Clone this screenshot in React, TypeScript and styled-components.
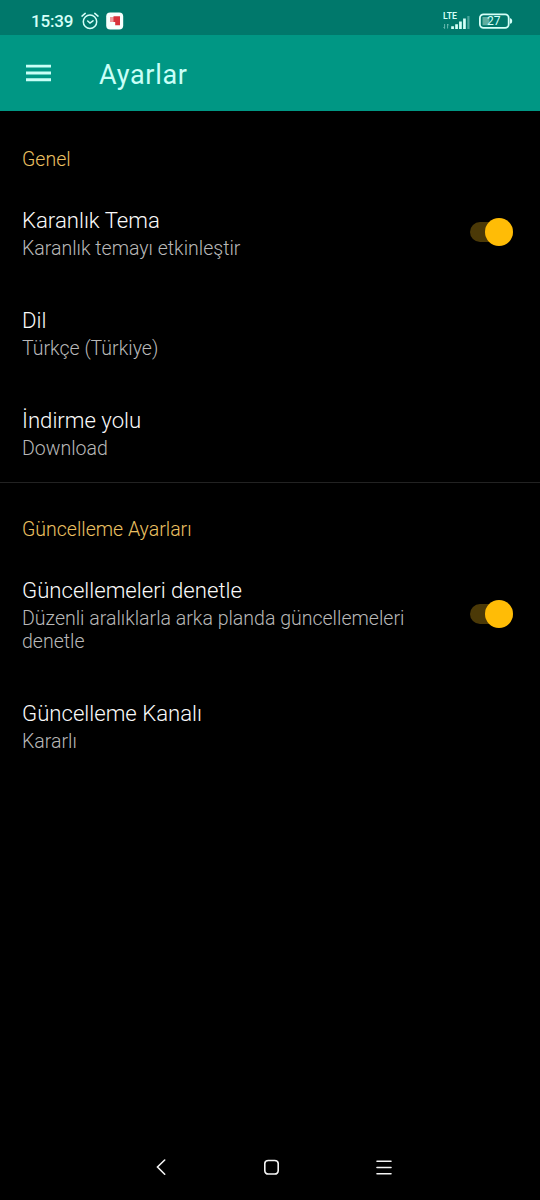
import React from 'react';
import styled, { createGlobalStyle } from 'styled-components';

const GlobalStyle = createGlobalStyle`
  * { box-sizing: border-box; }
  body { margin: 0; background: #000; font-family: Roboto, sans-serif; }
`;

const Screen = styled.div`
  width: 540px;
  height: 1200px;
  display: flex;
  flex-direction: column;
  background: #000;
  color: #fafafa;
  overflow: hidden;
`;

const StatusBar = styled.div`
  height: 35px;
  flex: none;
  display: flex;
  justify-content: space-between;
  padding: 7px 26px 0 31px;
  background: #00786b;
  color: #d5fff8;
`;

const StatusGroup = styled.div<{ $gap: number }>`
  display: flex;
  align-items: center;
  height: 28px;
  gap: ${(p) => p.$gap}px;
`;

const Clock = styled.span`
  width: 43px;
  font-size: 17px;
  font-weight: 500;
  line-height: 28px;
  letter-spacing: -0.2px;
  white-space: nowrap;
`;

const AppBar = styled.header`
  height: 76px;
  flex: none;
  display: flex;
  align-items: center;
  padding: 0 26px;
  gap: 48px;
  background: #009784;
  color: #c9fff7;
`;

const AppTitle = styled.h1`
  margin: 3px 0 0;
  font-size: 27px;
  font-weight: 400;
  line-height: 32px;
  letter-spacing: 0.7px;
`;

const Icon = styled.svg`
  display: block;
  flex: none;
`;

const Section = styled.section<{ $top: number }>`
  padding-top: ${(p) => p.$top}px;

  & + & { border-top: 1px solid #222; }
`;

const SectionTitle = styled.h2`
  margin: 0 0 13px;
  padding: 0 22px;
  font-size: 19.5px;
  font-weight: 350;
  line-height: 24px;
  color: #ecc062;
`;

const Row = styled.div`
  display: flex;
  align-items: center;
  justify-content: space-between;
  padding: 23px 27px 25px 22px;

  &:last-child { padding-bottom: 22px; }
`;

const RowText = styled.div`
  width: 400px;
`;

const RowTitle = styled.div`
  font-size: 22.15px;
  line-height: 24px;
  font-weight: 350;
  margin-bottom: 5px;
`;

const RowSummary = styled.div`
  font-size: 19.55px;
  line-height: 23px;
  font-weight: 300;
  color: #b8b8b8;
`;

const Track = styled.div`
  width: 43px;
  height: 20px;
  display: flex;
  align-items: center;
  justify-content: flex-end;
  margin-bottom: 4px;
  border-radius: 10px;
  background: #4b3907;
`;

const Thumb = styled.div`
  width: 28px;
  height: 28px;
  flex: none;
  border-radius: 50%;
  background: #ffbc06;
`;

const NavBar = styled.nav`
  margin-top: auto;
  height: 66px;
  display: flex;
  justify-content: space-between;
  align-items: center;
  padding: 0 147px 0 152px;
`;

const Switch = () => (
  <Track role="switch" aria-checked="true">
    <Thumb />
  </Track>
);

interface PreferenceProps {
  title: string;
  summary: string;
  toggle?: boolean;
}

const Preference = ({ title, summary, toggle }: PreferenceProps) => (
  <Row>
    <RowText>
      <RowTitle>{title}</RowTitle>
      <RowSummary>{summary}</RowSummary>
    </RowText>
    {toggle && <Switch />}
  </Row>
);

const AlarmIcon = () => (
  <Icon width="18" height="18" viewBox="0 0 18 18" fill="none" stroke="currentColor" strokeWidth="1.5" strokeLinecap="round">
    <circle cx="9" cy="9.7" r="6.7" />
    <path d="M1 4.1 4.2 1.4M17 4.1 13.8 1.4M6.7 9l2.3 2 3-2.2" />
  </Icon>
);

const AppBadge = () => (
  <Icon width="18" height="18" viewBox="0 0 18 18">
    <rect x="0.2" y="0.5" width="17" height="17" rx="4" fill="#f7fffd" />
    <path d="M4 5h5v5H4z" fill="#ef9a9c" />
    <path d="M7.5 4.2H14v9H9.2V10H7.5z" fill="#d8333b" />
  </Icon>
);

const SignalIcon = () => (
  <Icon width="29" height="20" viewBox="0 0 29 20" fill="currentColor">
    <text x="0" y="7.5" fontSize="8.5" fontWeight="600" textLength="14" lengthAdjust="spacingAndGlyphs">LTE</text>
    <path d="M8.2 15.2h2.7V18H8.2zM12.2 13.3h2.7V18h-2.7zM16.1 10.6h2.7V18h-2.7zM20.1 7.6h2.7V18h-2.7z" />
    <path d="M24.3 5h2.2v13h-2.2z" opacity="0.35" />
    <path d="M1.6 13v4.5M4.6 13v4.5M.6 16.2l1 1.3M4.6 13l1 1.3" stroke="currentColor" strokeWidth="0.8" opacity="0.6" />
  </Icon>
);

const BatteryIcon = () => (
  <Icon width="36" height="16" viewBox="0 0 36 16">
    <rect x="1.9" y="1.3" width="28.8" height="13.6" rx="3.6" fill="none" stroke="currentColor" strokeWidth="1.8" />
    <path d="M4.5 4h7v8.2h-7z" fill="#5fae9f" />
    <path d="M32 5.2c1.6.3 2.2 1.2 2.2 2.8s-.6 2.5-2.2 2.8z" fill="currentColor" />
    <text x="15.7" y="12.2" textAnchor="middle" fontSize="12" fill="currentColor">27</text>
  </Icon>
);

const MenuIcon = () => (
  <Icon width="25" height="18" viewBox="0 0 25 18" fill="currentColor">
    <path d="M0 .7h25v2.9H0zM0 7.5h25v2.9H0zM0 14.3h25v2.9H0z" />
  </Icon>
);

const NavIcon = ({ d }: { d: string }) => (
  <Icon width="18" height="18" viewBox="0 0 18 18" fill="none" stroke="#f4f4f4" strokeWidth="1.6" strokeLinecap="round">
    <path d={d} />
  </Icon>
);

export default function App() {
  return (
    <Screen>
      <GlobalStyle />
      <StatusBar>
        <StatusGroup $gap={7}>
          <Clock>15:39</Clock>
          <AlarmIcon />
          <AppBadge />
        </StatusGroup>
        <StatusGroup $gap={6}>
          <SignalIcon />
          <BatteryIcon />
        </StatusGroup>
      </StatusBar>
      <AppBar>
        <MenuIcon />
        <AppTitle>Ayarlar</AppTitle>
      </AppBar>
      <main>
        <Section $top={37}>
          <SectionTitle>Genel</SectionTitle>
          <Preference title="Karanlık Tema" summary="Karanlık temayı etkinleştir" toggle />
          <Preference title="Dil" summary="Türkçe (Türkiye)" />
          <Preference title="İndirme yolu" summary="Download" />
        </Section>
        <Section $top={35}>
          <SectionTitle>Güncelleme Ayarları</SectionTitle>
          <Preference
            title="Güncellemeleri denetle"
            summary="Düzenli aralıklarla arka planda güncellemeleri denetle"
            toggle
          />
          <Preference title="Güncelleme Kanalı" summary="Kararlı" />
        </Section>
      </main>
      <NavBar>
        <NavIcon d="M12.7 2 5.5 9l7.2 7.2" />
        <NavIcon d="M4.4 2.5h6.2Q14 2.5 14.2 5.4v7.2Q14 16 10.6 16H4.4Q1 16 .8 12.6V5.4Q1 2.5 4.4 2.5z" />
        <NavIcon d="M2 3.3h14M2 9.5h14M2 15.7h14" />
      </NavBar>
    </Screen>
  );
}
